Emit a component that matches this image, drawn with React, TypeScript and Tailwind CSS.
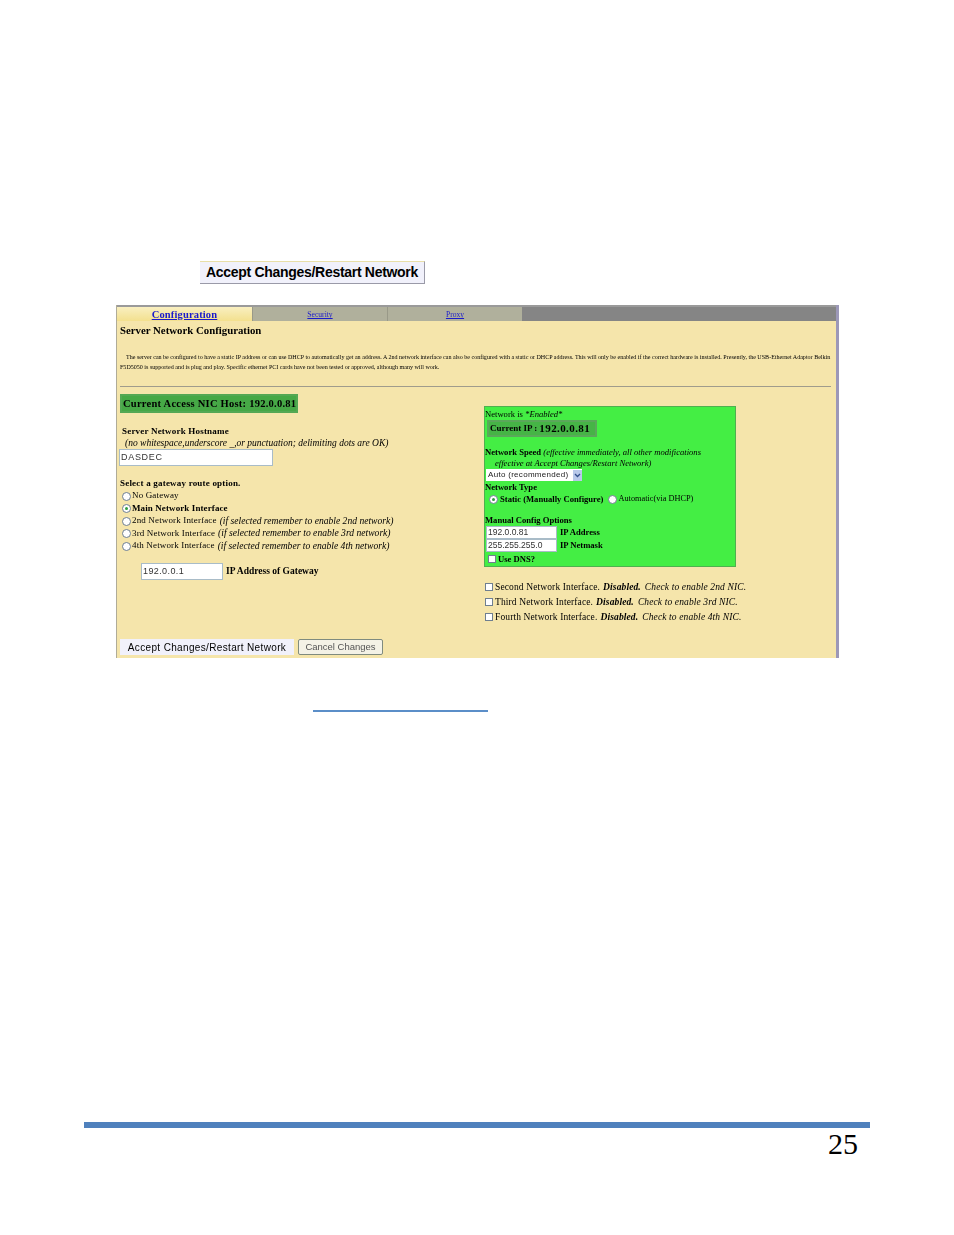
import React from "react";

const gateways = [
  { label: "No Gateway", note: "", on: false, h: "h-[12px]" },
  { label: "Main Network Interface", note: "", on: true, h: "h-[13px]" },
  { label: "2nd Network Interface", note: "(if selected remember to enable 2nd network)", on: false, h: "h-[12px]" },
  { label: "3rd Network Interface", note: "(if selected remember to enable 3rd network)", on: false, h: "h-[13px]" },
  { label: "4th Network Interface", note: "(if selected remember to enable 4th network)", on: false, h: "h-[12px]" },
];

const nics = [
  { name: "Second Network Interface.", note: "Check to enable 2nd NIC." },
  { name: "Third Network Interface.", note: "Check to enable 3rd NIC." },
  { name: "Fourth Network Interface.", note: "Check to enable 4th NIC." },
];

function Radio({ on }: { on: boolean }) {
  return (
    <span className="flex h-[9px] w-[9px] shrink-0 items-center justify-center rounded-full border border-[#6f7f90] bg-white">
      {on && <span className="h-[3px] w-[3px] rounded-full bg-[#2f9e3f]" />}
    </span>
  );
}

function Check() {
  return <span className="h-[8px] w-[8px] shrink-0 border border-[#6f7f90] bg-white" />;
}

function TextBox({ value, className }: { value: string; className: string }) {
  return (
    <div className={`flex items-center border border-[#a9bcc8] bg-white font-['Liberation_Sans',sans-serif] text-[#333] ${className}`}>
      {value}
    </div>
  );
}

export default function App() {
  return (
    <div className="flex h-[1235px] w-[954px] flex-col overflow-hidden bg-white font-['Liberation_Serif',serif] text-black">
      <div className="ml-[200px] mt-[261px] flex h-[23px] w-[225px] items-center justify-center border-b border-r border-t border-b-[#9a9aa8] border-r-[#9a9aa8] border-t-[#e8dfa8] bg-[#f1f1fb] font-['Liberation_Sans',sans-serif] text-[14px] font-bold tracking-[-0.3px]">
        Accept Changes/Restart Network
      </div>

      {/* screenshot of the network config page */}
      <div className="ml-[116px] mt-[21px] flex h-[353px] w-[723px] flex-col border-l border-r-[3px] border-[#b0ac98] border-r-[#9c98b8] bg-[#f5e5ab] blur-[0.3px]">
        <div className="h-[2px] bg-[#9a9a9a]" />
        <div className="flex h-[14px] bg-[#858585] text-[7.6px]">
          <div className="flex w-[135px] items-center justify-center bg-gradient-to-b from-[#f9efc0] to-[#f3e08e] pt-[1px] text-[10.5px] font-bold tracking-[0.15px] text-[#1a1acc] underline">
            Configuration
          </div>
          <div className="flex w-[135px] items-center justify-center border-l border-[#999988] bg-[#b0b09c] pt-[2px] text-[#1a1acc] underline">
            Security
          </div>
          <div className="flex w-[135px] items-center justify-center border-l border-[#999988] bg-[#b0b09c] pt-[2px] text-[#1a1acc] underline">
            Proxy
          </div>
        </div>

        <div className="ml-[3px] mt-[2px] h-[14px] text-[10.8px] font-bold leading-[14px]">Server Network Configuration</div>

        <div className="ml-[3px] mt-[15px] h-[20px] w-[714px] text-[6.06px] leading-[10px]">
          <div className="whitespace-nowrap pl-[6px]">
            The server can be configured to have a static IP address or can use DHCP to automatically get an address. A 2nd network interface can also be configured with a static or DHCP address. This will only be enabled if the correct hardware is installed. Presently, the USB-Ethernet Adaptor Belkin
          </div>
          <div className="whitespace-nowrap">
            F5D5050 is supported and is plug and play. Specific ethernet PCI cards have not been tested or approved, although many will work.
          </div>
        </div>

        <div className="ml-[3px] mt-[14px] h-px w-[711px] bg-[#a09c8c]" />

        <div className="flex">
          <div className="w-[367px] pl-[3px]">
            <div className="mt-[7px] flex h-[19px] w-[178px] items-center whitespace-nowrap border-2 border-[#54a854] bg-[#46a846] pl-[1px] text-[10.5px] font-bold tracking-[0.25px]">
              Current Access NIC Host: 192.0.0.81
            </div>
            <div className="ml-[2px] mt-[12px] h-[12px] text-[9px] font-bold leading-[12px] tracking-[0.2px]">Server Network Hostname</div>
            <div className="ml-[5px] h-[12px] whitespace-nowrap text-[9.5px] italic leading-[12px]">
              (no whitespace,underscore _,or punctuation; delimiting dots are OK)
            </div>
            <TextBox value="DASDEC" className="-ml-[1px] h-[17px] w-[154px] px-[1px] text-[9px] tracking-[0.7px]" />
            <div className="mt-[11px] h-[12px] text-[9px] font-bold leading-[12px] tracking-[0.2px]">Select a gateway route option.</div>
            <div className="mt-[1px] flex flex-col">
              {gateways.map((g) => (
                <div key={g.label} className={`ml-[2px] flex items-center gap-[1px] whitespace-nowrap text-[9px] ${g.h}`}>
                  <Radio on={g.on} />
                  <span className={g.on ? "font-bold tracking-[0.1px]" : "tracking-[0.15px]"}>{g.label}</span>
                  {g.note && <i className="ml-[2px] text-[9.6px]">{g.note}</i>}
                </div>
              ))}
            </div>
            <div className="ml-[21px] mt-[11px] flex items-center gap-[3px]">
              <TextBox value="192.0.0.1" className="h-[17px] w-[82px] px-[1px] text-[9px] tracking-[0.4px]" />
              <span className="text-[9.5px] font-bold">IP Address of Gateway</span>
            </div>
            <div className="mt-[59px] flex items-center gap-[4px]">
              <div className="flex h-[16px] w-[174px] items-center justify-center bg-[#f1f1fb] font-['Liberation_Sans',sans-serif] text-[10px] tracking-[0.35px]">
                Accept Changes/Restart Network
              </div>
              <div className="flex h-[16px] w-[85px] items-center justify-center rounded-[2px] border border-[#7f8b7f] bg-[#f4f2e6] font-['Liberation_Sans',sans-serif] text-[9.5px] text-[#555]">
                Cancel Changes
              </div>
            </div>
          </div>

          <div className="pt-[19px]">
            <div className="h-[161px] w-[252px] border border-[#4fb04f] bg-[#44ee44] pt-[1px] text-[8.6px]">
              <div className="h-[12px] leading-[12px]">
                Network is <i>*Enabled*</i>
              </div>
              <div className="ml-[2px] flex h-[17px] w-[110px] items-center border-2 border-[#5aa85a] bg-[#46b446] pl-[1px] text-[9px] font-bold">
                Current IP :<span className="ml-[2px] text-[11px] tracking-[0.4px]">192.0.0.81</span>
              </div>
              <div className="mt-[10px] h-[11px] whitespace-nowrap leading-[11px]">
                <b>Network Speed</b> <i>(effective immediately, all other modifications</i>
              </div>
              <div className="ml-[10px] h-[11px] whitespace-nowrap italic leading-[11px]">effective at Accept Changes/Restart Network)</div>
              <div className="ml-[1px] flex h-[12px] w-[96px] items-center justify-between bg-white pl-[2px] font-['Liberation_Sans',sans-serif] text-[8px] tracking-[0.3px] text-[#222]">
                Auto (recommended)
                <span className="flex h-[11px] w-[9px] items-center justify-center bg-[#b8c8ea] text-[#33508c]">
                  <svg width="7" height="5" viewBox="0 0 7 5"><path d="M1 1l2.5 2.5L6 1" fill="none" stroke="currentColor" strokeWidth="1.3" /></svg>
                </span>
              </div>
              <div className="h-[12px] font-bold leading-[12px]">Network Type</div>
              <div className="ml-[4px] flex h-[12px] items-center gap-[1px] whitespace-nowrap">
                <Radio on />
                <span className="ml-[1px] font-bold">Static (Manually Configure)</span>
                <span className="ml-[4px]"><Radio on={false} /></span>
                <span className="text-[8.3px]">Automatic(via DHCP)</span>
              </div>
              <div className="mt-[10px] h-[11px] font-bold leading-[11px]">Manual Config Options</div>
              <div className="ml-[1px] flex items-center gap-[3px]">
                <TextBox value="192.0.0.81" className="h-[13px] w-[71px] px-[1px] text-[8.5px]" />
                <b>IP Address</b>
              </div>
              <div className="ml-[1px] flex items-center gap-[3px]">
                <TextBox value="255.255.255.0" className="h-[13px] w-[71px] px-[1px] text-[8.5px]" />
                <b>IP Netmask</b>
              </div>
              <div className="ml-[3px] mt-[1px] flex h-[12px] items-center gap-[2px]">
                <Check />
                <b>Use DNS?</b>
              </div>
            </div>

            <div className="mt-[15px] flex flex-col gap-[5px] pl-[1px] text-[9.5px] tracking-[0.12px]">
              {nics.map((n) => (
                <div key={n.name} className="flex h-[10px] items-center gap-[2px] whitespace-nowrap">
                  <Check />
                  <span>{n.name}</span>
                  <b className="ml-[1px] italic">Disabled.</b>
                  <i className="ml-[2px]">{n.note}</i>
                </div>
              ))}
            </div>
          </div>
        </div>
      </div>

      <div className="ml-[313px] mt-[52px] h-[2px] w-[175px] bg-[#5b8ec8]" />

      <div className="ml-[84px] mt-[410px] h-[6px] w-[786px] bg-[#4f81bd]" />
      <div className="mr-[96px] text-right text-[30px] leading-[32px]">25</div>
    </div>
  );
}
